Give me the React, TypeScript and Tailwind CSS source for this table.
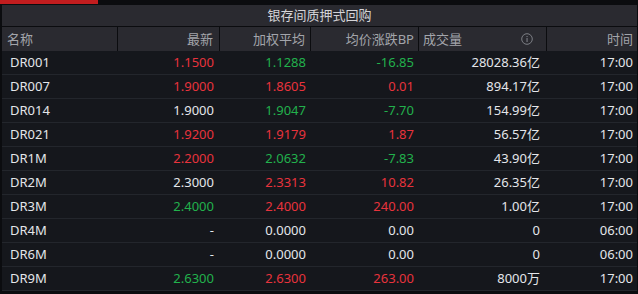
import React from "react";

type Row = {
  name: string;
  last: [string, string];
  avg: [string, string];
  bp: [string, string];
  vol: string;
  time: string;
};

const R = "text-[#e8333c]";
const G = "text-[#22b14c]";
const W = "text-[#e4e6ea]";

const rows: Row[] = [
  { name: "DR001", last: ["1.1500", R], avg: ["1.1288", G], bp: ["-16.85", G], vol: "28028.36亿", time: "17:00" },
  { name: "DR007", last: ["1.9000", R], avg: ["1.8605", R], bp: ["0.01", R], vol: "894.17亿", time: "17:00" },
  { name: "DR014", last: ["1.9000", W], avg: ["1.9047", G], bp: ["-7.70", G], vol: "154.99亿", time: "17:00" },
  { name: "DR021", last: ["1.9200", R], avg: ["1.9179", R], bp: ["1.87", R], vol: "56.57亿", time: "17:00" },
  { name: "DR1M", last: ["2.2000", R], avg: ["2.0632", G], bp: ["-7.83", G], vol: "43.90亿", time: "17:00" },
  { name: "DR2M", last: ["2.3000", W], avg: ["2.3313", R], bp: ["10.82", R], vol: "26.35亿", time: "17:00" },
  { name: "DR3M", last: ["2.4000", G], avg: ["2.4000", R], bp: ["240.00", R], vol: "1.00亿", time: "17:00" },
  { name: "DR4M", last: ["-", W], avg: ["0.0000", W], bp: ["0.00", W], vol: "0", time: "06:00" },
  { name: "DR6M", last: ["-", W], avg: ["0.0000", W], bp: ["0.00", W], vol: "0", time: "06:00" },
  { name: "DR9M", last: ["2.6300", G], avg: ["2.6300", R], bp: ["263.00", R], vol: "8000万", time: "17:00" },
];

const grid = "grid grid-cols-[116px_102px_91px_108px_128px_1fr]";

export default function App() {
  return (
    <div
      className="w-[638px] h-[294px] bg-[#0b0c0f] overflow-hidden text-[13px]"
      style={{ fontFamily: '"Noto Sans", "Noto Sans CJK SC", sans-serif' }}
    >
      <div className="h-[4px] flex">
        <div className="w-[98px] bg-[#c21d1f]" />
      </div>
      <div className="pt-[1px] pl-[2px] pr-[1px]">
        <div className="h-[21px] bg-[#2a2a30] flex items-center justify-center text-[#d4d4d8] leading-none">
          银存间质押式回购
        </div>
        <div className={`${grid} h-[24px] mt-[1px] bg-[#2a2a30] text-[#a3a5ab] leading-none`}>
          <div className="flex items-center pl-[5px] border-r border-[#0b0c0f]">名称</div>
          <div className="flex items-center justify-end pr-[6px] border-r border-[#0b0c0f]">最新</div>
          <div className="flex items-center justify-end pr-[5px] border-r border-[#0b0c0f]">加权平均</div>
          <div className="flex items-center justify-end pr-[4px] border-r border-[#0b0c0f]">均价涨跌BP</div>
          <div className="flex items-center justify-between pl-[4px] pr-[13px] border-r border-[#0b0c0f]">
            <span>成交量</span>
            <svg width="12" height="12" viewBox="0 0 12 12" fill="none">
              <circle cx="6" cy="6" r="5.3" stroke="#7d7f85" strokeWidth="1" />
              <rect x="5.5" y="5" width="1.1" height="4" fill="#7d7f85" />
              <rect x="5.5" y="3" width="1.1" height="1.1" fill="#7d7f85" />
            </svg>
          </div>
          <div className="flex items-center justify-end pr-[4px]">时间</div>
        </div>
        <div className="bg-[#15171c]">
          {rows.map((r) => (
            <div key={r.name} className={`${grid} h-[24px] border-b border-[#23262c] leading-none`}>
              <div className={`flex items-center pl-[8px] ${W}`}>{r.name}</div>
              <div className={`flex items-center justify-end pr-[6px] ${r.last[1]}`}>{r.last[0]}</div>
              <div className={`flex items-center justify-end pr-[5px] ${r.avg[1]}`}>{r.avg[0]}</div>
              <div className={`flex items-center justify-end pr-[5px] ${r.bp[1]}`}>{r.bp[0]}</div>
              <div className={`flex items-center justify-end pr-[7px] ${W}`}>{r.vol}</div>
              <div className={`flex items-center justify-end pr-[4px] ${W}`}>{r.time}</div>
            </div>
          ))}
        </div>
      </div>
    </div>
  );
}
